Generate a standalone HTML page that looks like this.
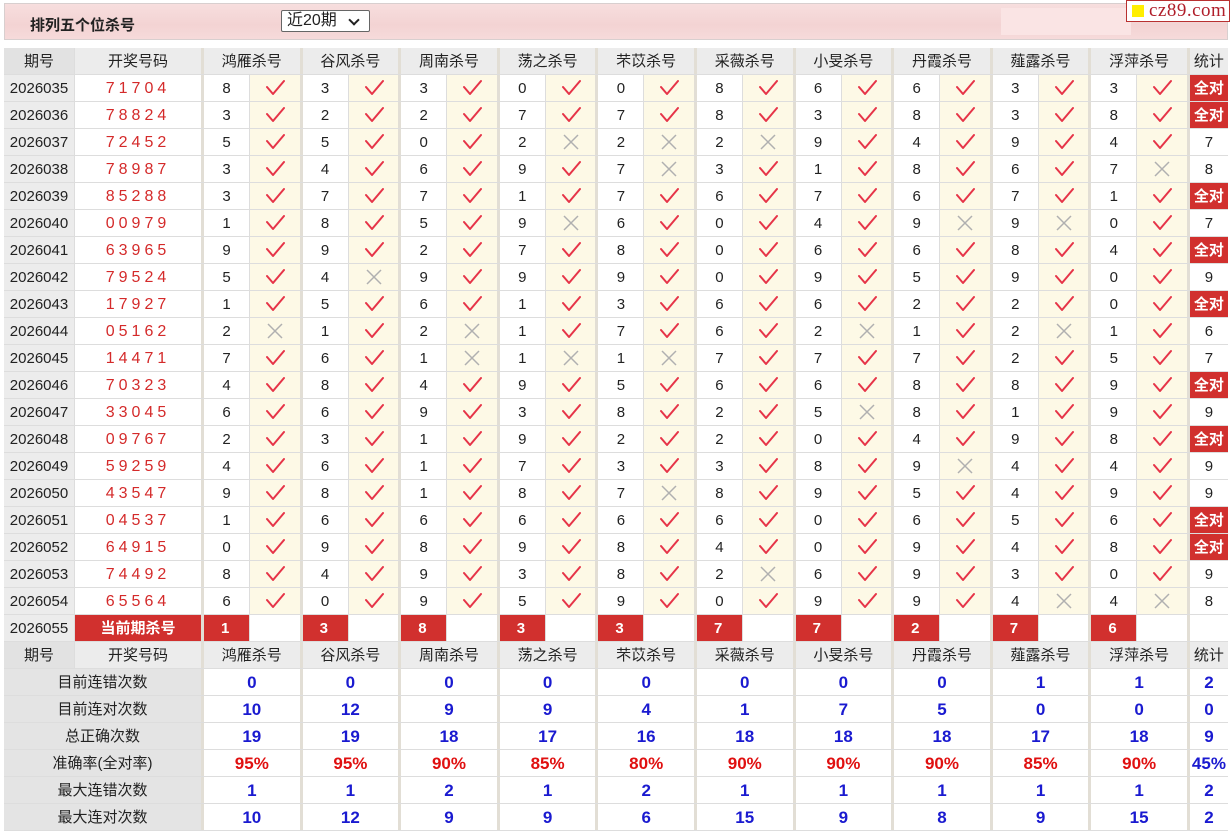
<!DOCTYPE html>
<html><head><meta charset="utf-8"><style>
*{margin:0;padding:0;box-sizing:border-box}
body{width:1230px;height:830px;background:#fff;font-family:"Liberation Sans","Noto Sans CJK SC",sans-serif;position:relative;overflow:hidden;color:#222}
.top{position:absolute;left:4px;top:3px;width:1224px;height:37px;border:1px solid #d8cfcf;background:linear-gradient(#f7dede,#f3d3d3 60%,#f6dada)}
.top .t{position:absolute;left:25px;top:10px;font-size:15px;font-weight:bold;color:#222}
.sel{position:absolute;left:276px;top:6px;width:89px;height:22px;border:1px solid #666;border-radius:2px;background:#fff;font-size:16px;padding-left:5px;line-height:20px}
.sel:after{content:"";position:absolute;right:11px;top:5px;width:6px;height:6px;border-right:2px solid #222;border-bottom:2px solid #222;transform:rotate(45deg)}
.inner{position:absolute;left:996px;top:4px;width:130px;height:27px;background:#fae4e4}
.logo{position:absolute;left:1126px;top:0;width:104px;height:22px;background:#fff;border:1px solid #b83030;font-family:"Liberation Serif",serif;font-size:19px;color:#b01e2a;line-height:19px;padding-left:22px;letter-spacing:0.5px}
.logo:before{content:"";position:absolute;left:5px;top:4px;width:12px;height:12px;background:#ffee00}
.tb{position:absolute;left:4px;top:48px;width:1224px}
.r{display:flex;height:27px;background:#ddd;padding-bottom:1px}
.r>div{height:26px;line-height:28px;text-align:center;font-size:15px;flex:none;overflow:hidden}
.a{width:70px;margin-right:1px;background:#ececec}
.b{width:126px;background:#fff;color:#d42a2a;letter-spacing:4px;font-size:16px!important}
.s{width:3px;background:#e2ded5!important}
.n{width:45px;margin-right:1px;background:#fff}
.m{width:49.6px;background:#fdf9e6;position:relative}
.st{width:38px;background:#fff}
.h>div{background:#ececec}
.h .a{background:#e2e2e2}
.h .g{width:95.6px;background:#ececec}
.q{background:#d1302e!important;color:#fff;font-weight:bold}
.m svg{position:absolute;left:15px;top:4px}
.L{width:197px;background:#e4e4e4}
.G{width:95.6px;background:#fff;color:#1a1ad0;font-weight:bold;font-size:17px!important}
.R{color:#e01010}
.S{color:#1a1ad0;font-weight:bold;font-size:17px!important}
.cr .n.q{text-align:left;padding-left:17px}
.cr .m{background:#fff}
</style></head><body>
<svg width="0" height="0" style="position:absolute"><defs>
<g id="c"><path d="M2 8 L8 15 L19 2" fill="none" stroke="#e63448" stroke-width="2" stroke-linecap="round" stroke-linejoin="round"/></g>
<g id="x"><path d="M3 2 L17 16 M17 2 L3 16" fill="none" stroke="#b0b0b0" stroke-width="1.5"/></g>
</defs></svg>
<div class="top"><div class="t">排列五个位杀号</div><div class="sel">近20期</div><div class="inner"></div></div>
<div class="logo">cz89.com</div>
<div class="tb" id="tb">
<div class="r h"><div class="a">期号</div><div class="b" style="color:#222;letter-spacing:0;font-size:15px!important">开奖号码</div><div class="s"></div><div class="g">鸿雁杀号</div><div class="s"></div><div class="g">谷风杀号</div><div class="s"></div><div class="g">周南杀号</div><div class="s"></div><div class="g">荡之杀号</div><div class="s"></div><div class="g">芣苡杀号</div><div class="s"></div><div class="g">采薇杀号</div><div class="s"></div><div class="g">小旻杀号</div><div class="s"></div><div class="g">丹霞杀号</div><div class="s"></div><div class="g">薤露杀号</div><div class="s"></div><div class="g">浮萍杀号</div><div class="s"></div><div class="st" style="background:#ececec">统计</div></div>
</div>
<script>
var D=[
["2026035","71704","8c3c3c0c0c8c6c6c3c3c","全对"],
["2026036","78824","3c2c2c7c7c8c3c8c3c8c","全对"],
["2026037","72452","5c5c0c2x2x2x9c4c9c4c","7"],
["2026038","78987","3c4c6c9c7x3c1c8c6c7x","8"],
["2026039","85288","3c7c7c1c7c6c7c6c7c1c","全对"],
["2026040","00979","1c8c5c9x6c0c4c9x9x0c","7"],
["2026041","63965","9c9c2c7c8c0c6c6c8c4c","全对"],
["2026042","79524","5c4x9c9c9c0c9c5c9c0c","9"],
["2026043","17927","1c5c6c1c3c6c6c2c2c0c","全对"],
["2026044","05162","2x1c2x1c7c6c2x1c2x1c","6"],
["2026045","14471","7c6c1x1x1x7c7c7c2c5c","7"],
["2026046","70323","4c8c4c9c5c6c6c8c8c9c","全对"],
["2026047","33045","6c6c9c3c8c2c5x8c1c9c","9"],
["2026048","09767","2c3c1c9c2c2c0c4c9c8c","全对"],
["2026049","59259","4c6c1c7c3c3c8c9x4c4c","9"],
["2026050","43547","9c8c1c8c7x8c9c5c4c9c","9"],
["2026051","04537","1c6c6c6c6c6c0c6c5c6c","全对"],
["2026052","64915","0c9c8c9c8c4c0c9c4c8c","全对"],
["2026053","74492","8c4c9c3c8c2x6c9c3c0c","9"],
["2026054","65564","6c0c9c5c9c0c9c9c4x4x","8"]];
var h='';
D.forEach(function(d){h+='<div class="r"><div class="a">'+d[0]+'</div><div class="b">'+d[1]+'</div><div class="s"></div>';
for(var i=0;i<10;i++){var n=d[2][i*2],k=d[2][i*2+1];h+='<div class="n">'+n+'</div><div class="m"><svg width="20" height="18"><use href="#'+k+'"/></svg></div><div class="s"></div>';}
h+=d[3]=='全对'?'<div class="st q">全对</div>':'<div class="st">'+d[3]+'</div>';h+='</div>';});
h+='<div class="r cr"><div class="a">2026055</div><div class="b q" style="letter-spacing:0;font-size:15px!important">当前期杀号</div><div class="s"></div>';
"1383377276".split('').forEach(function(v){h+='<div class="n q">'+v+'</div><div class="m"></div><div class="s"></div>';});
h+='<div class="st"></div></div>';
h+=document.querySelector('.r.h').outerHTML;
var S=[["目前连错次数","0 0 0 0 0 0 0 0 1 1 2"],["目前连对次数","10 12 9 9 4 1 7 5 0 0 0"],["总正确次数","19 19 18 17 16 18 18 18 17 18 9"],["准确率(全对率)","95% 95% 90% 85% 80% 90% 90% 90% 85% 90% 45%"],["最大连错次数","1 1 2 1 2 1 1 1 1 1 2"],["最大连对次数","10 12 9 9 6 15 9 8 9 15 2"]];
S.forEach(function(s){var v=s[1].split(' ');h+='<div class="r"><div class="L">'+s[0]+'</div><div class="s"></div>';
for(var i=0;i<10;i++)h+='<div class="G'+(v[i].indexOf('%')>0?' R':'')+'">'+v[i]+'</div><div class="s"></div>';
h+='<div class="st S'+(v[10].indexOf('%')>0?' R':'')+'">'+v[10]+'</div></div>';});
document.getElementById('tb').insertAdjacentHTML('beforeend',h);
</script>
</body></html>
